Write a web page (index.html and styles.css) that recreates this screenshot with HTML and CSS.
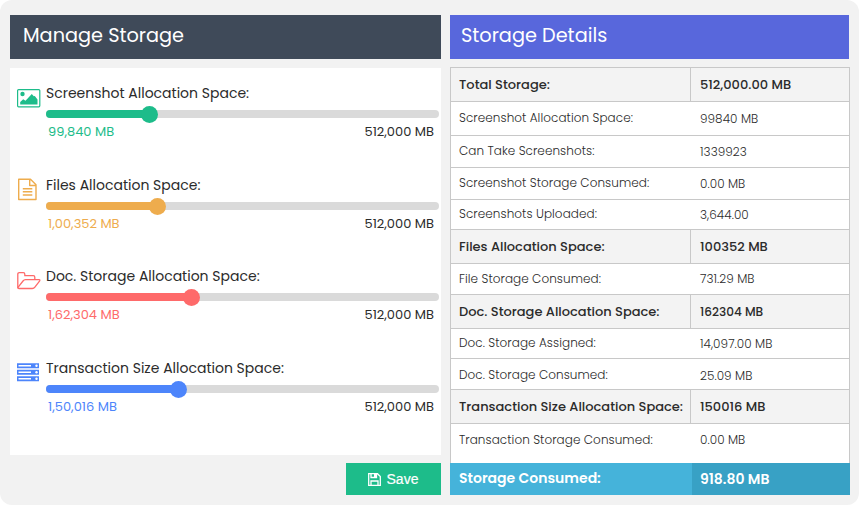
FILE: index.html
```html
<!DOCTYPE html>
<html lang="en">
<head>
<meta charset="utf-8">
<title>Storage</title>
<link rel="stylesheet" href="styles.css">
</head>
<body>
<main class="page">
  <section class="manage">
    <h2 class="title title-dark">Manage Storage</h2>
    <div class="panel">
      <div class="item green">
        <svg class="icon" viewBox="0 0 24 24"><rect x=".6" y="3.6" width="22.2" height="17.200" rx="1" fill="none" stroke="currentColor" stroke-width="1.2"/><circle cx="5.5" cy="8" r="2.200"/><path d="M3.200 18.500v-2.600l3-2.700 2.300 1.500 6.300-6.700 2 2.300 1-.3 2.700 3.500v5z"/></svg>
        <div class="control">
          <div class="label">Screenshot Allocation Space:</div>
          <div class="track"><div class="fill"></div></div>
          <div class="values"><span>99,840 MB</span><span class="max">512,000 MB</span></div>
        </div>
      </div>
      <div class="item orange">
        <svg class="icon" viewBox="0 0 24 24"><g fill="none" stroke="currentColor" stroke-width="1.4" stroke-linejoin="round"><path d="M1.700 1.200h11.800l5.500 5.500v14.800H1.700zM12.700 1.500v6h6"/><path d="M5.800 10.700h9.500M5.800 13.800h9.500M5.800 17h9.500"/></g></svg>
        <div class="control">
          <div class="label">Files Allocation Space:</div>
          <div class="track"><div class="fill"></div></div>
          <div class="values"><span>1,00,352 MB</span><span class="max">512,000 MB</span></div>
        </div>
      </div>
      <div class="item red">
        <svg class="icon" viewBox="0 0 24 24"><g fill="none" stroke="currentColor" stroke-width="1.300" stroke-linejoin="round"><path d="M.8 18.700V5.200q0-1.500 1.500-1.500h4q1.500 0 1.500 1.500v1.500h8.500q1.500 0 1.500 1.500v2.500"/><path d="M.8 18.700 6 12q1-1.300 2.500-1.300H22q1.500 0 .5 1.400l-4.600 6q-1 1.400-2.600 1.400H2Q.8 19.500.8 18.700z"/></g></svg>
        <div class="control">
          <div class="label">Doc. Storage Allocation Space:</div>
          <div class="track"><div class="fill"></div></div>
          <div class="values"><span>1,62,304 MB</span><span class="max">512,000 MB</span></div>
        </div>
      </div>
      <div class="item blue">
        <svg class="icon" viewBox="0 0 24 24"><path d="M0 2.300h22v5H0zM0 8.700h22v5H0zM0 15.200h22v5H0z"/><path fill="#fff" d="M1.500 4H14v1.600H1.500zM1.500 10.400H14V12H1.500zM1.500 16.900H14v1.600H1.500z"/><g fill="#fff"><circle cx="19.500" cy="4.800" r="1.200"/><circle cx="19.500" cy="11.200" r="1.200"/><circle cx="19.500" cy="17.700" r="1.200"/></g></svg>
        <div class="control">
          <div class="label">Transaction Size Allocation Space:</div>
          <div class="track"><div class="fill"></div></div>
          <div class="values"><span>1,50,016 MB</span><span class="max">512,000 MB</span></div>
        </div>
      </div>
    </div>
    <button class="save"><svg class="disk" viewBox="0 0 13 13"><path fill="none" stroke="currentColor" stroke-width="1.300" d="M.7.7h8.800l2.800 2.800v8.800H.7zM3 .7v3.800h5.500V.7M3 12.300V8h7v4.300"/><path fill="currentColor" d="M6 1h2v3H6z"/></svg>Save</button>
  </section>
  <section class="details">
    <h2 class="title title-blue">Storage Details</h2>
    <div class="table">
      <div class="row group r34"><span>Total Storage:</span><span>512,000.00 MB</span></div>
      <div class="row r34"><span>Screenshot Allocation Space:</span><span>99840 MB</span></div>
      <div class="row r32"><span>Can Take Screenshots:</span><span>1339923</span></div>
      <div class="row r32"><span>Screenshot Storage Consumed:</span><span>0.00 MB</span></div>
      <div class="row r30"><span>Screenshots Uploaded:</span><span>3,644.00</span></div>
      <div class="row group r34"><span>Files Allocation Space:</span><span>100352 MB</span></div>
      <div class="row r31"><span>File Storage Consumed:</span><span>731.29 MB</span></div>
      <div class="row group r34"><span>Doc. Storage Allocation Space:</span><span class="compact">162304 MB</span></div>
      <div class="row r30"><span>Doc. Storage Assigned:</span><span>14,097.00 MB</span></div>
      <div class="row r31 low"><span>Doc. Storage Consumed:</span><span>25.09 MB</span></div>
      <div class="row group r34"><span>Transaction Size Allocation Space:</span><span>150016 MB</span></div>
      <div class="row last"><span>Transaction Storage Consumed:</span><span>0.00 MB</span></div>
    </div>
    <div class="total"><span>Storage Consumed:</span><span>918.80 MB</span></div>
  </section>
</main>
</body>
</html>
```
FILE: styles.css
```css
* { box-sizing: border-box; }
body { margin: 0; background: #fff; font-family: Poppins, Inter, sans-serif; color: #2b2b2b; }
.page { display: flex; gap: 9px; width: 859px; height: 505px; padding: 15px 9px 10px 10px; background: #f2f2f2; border-radius: 12px; }
.manage { width: 431px; display: flex; flex-direction: column; }
.details { width: 400px; display: flex; flex-direction: column; }
.title { margin: 0; height: 44px; line-height: 41px; font-size: 19.300px; font-weight: 400; color: #fff; }
.title-dark { background: #3f4a59; padding-left: 13px; }
.title-blue { background: #5867dc; padding-left: 11px; width: 399px; }
.panel { margin-top: 9px; height: 387px; padding: 15px 2px 0 7px; background: #fff; }
.item { display: flex; height: 92px; }
.item.orange { height: 91px; }
.icon { width: 24px; height: 24px; margin: 3px 5px 0 0; fill: currentColor; flex: none; }
.control { flex: 1; }
.label { height: 27px; line-height: 20px; font-size: 14px; color: #2b2b2b; white-space: nowrap; }
.track { height: 8px; border-radius: 4px; background: #dadada; }
.fill { position: relative; height: 8px; border-radius: 4px; background: currentColor; }
.fill::after { content: ""; position: absolute; right: -8px; top: -4px; width: 17px; height: 17px; border-radius: 50%; background: currentColor; }
.values { display: flex; justify-content: space-between; padding: 0 5px 0 2px; line-height: 27px; font-size: 13px; }
.max { color: #2b2b2b; }
.green { color: #1dbc8a; }
.green .fill { width: 104px; }
.orange { color: #eeac4d; }
.orange .fill { width: 112px; }
.red { color: #fe6a6a; }
.red .fill { width: 146px; }
.blue { color: #4d85fb; }
.blue .fill { width: 133px; }
.save { display: flex; align-items: center; justify-content: center; gap: 6px; align-self: flex-end; width: 95px; height: 32px; flex: none; margin-top: 8px; padding: 0 1px 0 0; border: 0; background: #1dbc8a; color: #fff; font: 14px "Liberation Sans", sans-serif; -webkit-text-stroke: .2px; }
.disk { width: 13px; height: 13px; }
.table { margin-top: 8px; height: 396px; background: #fff; border: 1px solid #c8c8c8; border-bottom: 0; }
.row { display: grid; grid-template-columns: 239px 1fr; border-bottom: 1px solid #c8c8c8; font-size: 12px; letter-spacing: .06px; font-weight: 300; white-space: nowrap; }
.row span { display: flex; align-items: center; padding-left: 10px; }
.row span:first-child { padding: 0 0 1px 8px; }
.group { grid-template-columns: 240px 1fr; background: #f3f3f3; font-size: 13px; letter-spacing: 0; font-weight: 500; }
.group span { padding-left: 9px; }
.group span:first-child { border-right: 1px solid #c8c8c8; padding-bottom: 0; }
.group .compact { font-size: 12.100px; }
.low span { padding-top: 3px; }
.low span:first-child { padding-top: 3px; }
.r34 { height: 34px; }
.r32 { height: 32px; }
.r31 { height: 31px; }
.r30 { height: 30px; }
.last { height: 32px; border: 0; }
.total { display: grid; grid-template-columns: 242px 1fr; height: 32px; line-height: 31px; color: #fff; font-size: 14px; font-weight: 600; }
.total span { height: 32px; padding-left: 9px; background: #45b3da; }
.total span:last-child { padding-left: 8px; line-height: 33px; background: #38a1c5; }
```
